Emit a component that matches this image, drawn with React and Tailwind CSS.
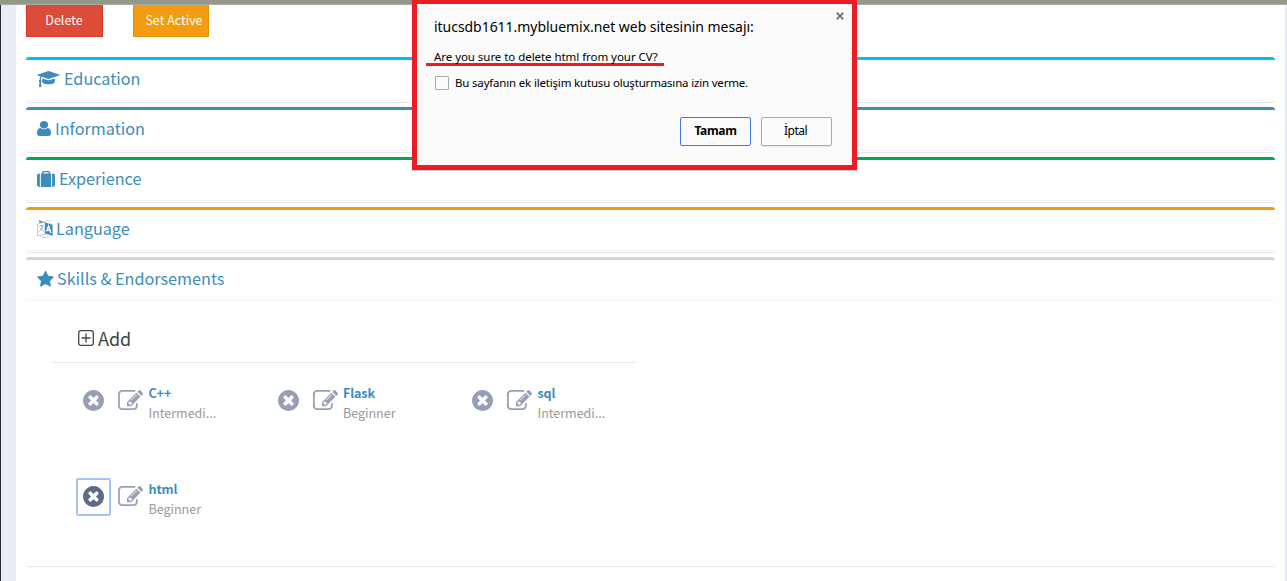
const PATHS = {
  cap: "M1774 836l18 316q4 69-82 128t-235 93.5-323 34.5-323-34.5-235-93.5-82-128l18-316 574 181q22 7 48 7t48-7zm530-324q0 23-22 31l-1120 352q-4 1-10 1t-10-1l-652-206q-43 34-71 111.5t-34 178.5q63 36 63 109 0 69-58 107l58 433q2 14-8 25-9 11-24 11h-192q-15 0-24-11-10-11-8-25l58-433q-58-38-58-107 0-73 65-111 11-207 98-330l-333-104q-22-8-22-31t22-31l1120-352q4-1 10-1t10 1l1120 352q22 8 22 31z",
  user: "M1536 1399q0 109-62.5 187t-150.5 78h-854q-88 0-150.5-78t-62.5-187q0-85 8.5-160.5t31.5-152 58.5-131 94-89 134.5-34.5q131 128 313 128t313-128q76 0 134.5 34.5t94 89 58.5 131 31.5 152 8.5 160.5zm-256-887q0 159-112.5 271.5t-271.5 112.5-271.5-112.5-112.5-271.5 112.5-271.5 271.5-112.5 271.5 112.5 112.5 271.5z",
  suitcase: "M640 256h512v-128h-512v128zm-352 0v1408h-64q-92 0-158-66t-66-158v-960q0-92 66-158t158-66h64zm1120 0v1408h-1024v-1408h128v-160q0-40 28-68t68-28h576q40 0 68 28t28 68v160h128zm384 224v960q0 92-66 158t-158 66h-64v-1408h64q92 0 158 66t66 158z",
  star: "M1728 647q0 22-26 48l-363 354 86 500q1 7 1 20 0 21-10.5 35.5t-30.5 14.5q-19 0-40-12l-449-236-449 236q-22 12-40 12-21 0-31.5-14.5t-10.5-35.5q0-6 2-20l86-500-364-354q-25-27-25-48 0-37 56-46l502-73 225-455q19-41 49-41t49 41l225 455 502 73q56 9 56 46z",
  remove: "M1277 1122q0-26-19-45l-181-181 181-181q19-19 19-45 0-27-19-46l-90-90q-19-19-46-19-26 0-45 19l-181 181-181-181q-19-19-45-19-27 0-46 19l-90 90q-19 19-19 46 0 26 19 45l181 181-181 181q-19 19-19 45 0 27 19 46l90 90q19 19 46 19 26 0 45-19l181-181 181 181q19 19 45 19 27 0 46-19l90-90q19-19 19-46zm387-226q0 209-103 385.5t-279.5 279.5-385.5 103-385.5-103-279.5-279.5-103-385.5 103-385.5 279.5-279.5 385.5-103 385.5 103 279.5 279.5 103 385.5z",
  edit: "M888 1184l116-116-152-152-116 116v56h96v96h56zm440-720q-16-16-33 1l-350 350q-17 17-1 33t33-1l350-350q17-17 1-33zm80 594v190q0 119-84.5 203.5t-203.5 84.5h-832q-119 0-203.5-84.5t-84.5-203.5v-832q0-119 84.5-203.5t203.5-84.5h832q63 0 117 25 15 7 18 23 3 17-9 29l-49 49q-14 14-32 8-23-6-45-6h-832q-66 0-113 47t-47 113v832q0 66 47 113t113 47h832q66 0 113-47t47-113v-126q0-13 9-22l64-64q15-15 35-7t20 29zm-96-738l288 288-672 672h-288v-288zm444 132l-92 92-288-288 92-92q28-28 68-28t68 28l152 152q28 28 28 68t-28 68z",
};

function Glyph({ name, viewBox, className }) {
  return (
    <svg viewBox={viewBox} className={className} fill="currentColor" preserveAspectRatio="none">
      <path d={PATHS[name]} />
    </svg>
  );
}

function LanguageIcon() {
  return (
    <svg viewBox="0 0 16 18" className="h-[18px] w-4 shrink-0">
      <path d="M2 0.3 9 2.5V4L2 2.2Z" fill="#3c8dbc" />
      <path d="M.5 4 8 2v12L.5 16Z" fill="#fff" stroke="#9db5ca" strokeWidth=".7" />
      <path d="M2.4 6.4 6.4 5.4M4.3 4.8v1.4M5.6 6c-.5 2.6-1.8 4.6-3.4 5.6M3 7.8c.8 1.4 2 2.5 3.6 3.2" fill="none" stroke="#7697b2" strokeWidth=".8" />
      <path d="M8 2.5 15.6 4.8v11L8 13.5Z" fill="#3c8dbc" />
      <path d="M9.5 11.6 11.6 6l2.3 7M10.3 9.8l2.8.8" fill="none" stroke="#fff" strokeWidth="1.3" />
      <path d="M8 2.5V.8h5.5v3" fill="none" stroke="#bccbd8" strokeWidth=".6" />
      <path d="M3 16c2.5 2 7 2 9.5.2" fill="none" stroke="#8fa3b5" strokeWidth=".8" strokeDasharray="1.5 .8" />
    </svg>
  );
}

function Section({ border, icon, gap, title, children }) {
  return (
    <section className={`rounded-[3px] border-t-[3px] bg-white shadow-[0_1px_1px_rgba(0,0,0,0.1)] ${border} ${children ? "h-[309px]" : "mb-[5px] h-[45px]"}`}>
      <h3 className={`flex h-[41px] items-center border-b border-[#f4f4f4] pb-[3px] pl-[11px] text-[16.2px] text-[#3c8dbc] ${gap}`}>
        {icon}
        <span className="pb-[2px] leading-[18px] whitespace-nowrap">{title}</span>
      </h3>
      {children}
    </section>
  );
}

function Skill({ name, level, active }) {
  return (
    <div className="flex h-24 w-[194.5px] items-start">
      <button className={`mt-[1px] flex h-[38px] w-[35px] shrink-0 items-center justify-center rounded-[2px] border-2 pb-[2px] ${active ? "border-[#a3c3fb] text-[#606c84]" : "border-transparent text-[#97a0b3]"}`}>
        <Glyph name="remove" viewBox="128 128 1536 1536" className="h-[21px] w-[21px]" />
      </button>
      <Glyph name="edit" viewBox="0 128 1784 1408" className="mt-[9px] ml-[7px] h-[20px] w-[25px] shrink-0 text-[#97a0b3]" />
      <div className="mt-[2px] ml-[5.5px] text-[12.5px] leading-5">
        <div className="font-semibold tracking-[-0.1px] text-[#3c8dbc]">{name}</div>
        <div className="text-[#999]">{level}</div>
      </div>
    </div>
  );
}

function Dialog() {
  return (
    <div className="absolute top-0 left-[412px] h-[170px] w-[445px] border-x-[5px] border-t-4 border-b-[5px] border-[#ed1c24] bg-[#fbfbfb] pt-[14px] pl-[17px] font-['Noto_Sans','Open_Sans',sans-serif] text-black shadow-[0_1px_1px_rgba(0,0,0,0.2)]">
      <svg viewBox="0 0 8 8" className="absolute top-2 right-[8px] h-2 w-2">
        <path d="m.8.8 6.4 6.4m0-6.4L.8 7.2" stroke="#777" strokeWidth="2" />
      </svg>
      <h2 className="text-[14px] leading-[18px] tracking-[-0.04px] whitespace-nowrap">itucsdb1611.mybluemix.net web sitesinin mesajı:</h2>
      <p className="mt-[13px] text-[11.5px] leading-4 tracking-[-0.05px] whitespace-nowrap">Are you sure to delete html from your CV?</p>
      <div className="-mt-[2px] -ml-2 h-[3px] w-[238px] bg-[#ed1c24]" />
      <label className="mt-[9px] ml-[1px] flex h-4 items-center gap-[6px] text-[11.5px] tracking-[-0.18px] whitespace-nowrap">
        <span className="h-[14px] w-[14px] rounded-[1px] border border-[#aaa]" />
        Bu sayfanın ek iletişim kutusu oluşturmasına izin verme.
      </label>
      <div className="mt-[26px] flex justify-end gap-[10px] pr-5 text-[12px] tracking-[-0.5px]">
        <button className="h-[29px] w-[71px] rounded-[2px] border border-[#3b78e7] pb-[2px] font-bold tracking-[-0.3px]">Tamam</button>
        <button className="h-[29px] w-[71px] rounded-[2px] border border-[#aaa] pr-[2px] pb-[2px] shadow-[0_1px_1px_rgba(0,0,0,0.08)]">İptal</button>
      </div>
    </div>
  );
}

export default function App() {
  return (
    <div className="relative flex h-[581px] w-[1287px] flex-col overflow-hidden bg-white font-['Noto_Sans_CJK_SC','Noto_Sans',sans-serif]">
      <div className="h-[5px] shrink-0 border-b border-[#aaa] bg-[#939888]" />
      <div className="flex min-h-0 flex-1 border-l border-[#222d32] bg-[#eaedf3]">
        <main className="mr-[2px] ml-[15px] flex-1 bg-white pr-[10.5px] pl-[10px] shadow-[0_1px_1px_rgba(0,0,0,0.1)]">
          <div className="mb-5 flex h-8 gap-[30px] text-[12.5px] text-white">
            <button className="h-8 w-[77px] border border-t-0 border-[#d73925] bg-[#dd4b39] pr-[1px]">Delete</button>
            <button className="h-8 w-[76px] border border-t-0 border-[#e08e0b] bg-[#f39c12] pl-[6px] whitespace-nowrap">Set Active</button>
          </div>
          <Section border="border-[#00c0ef]" gap="gap-1" title="Education" icon={<Glyph name="cap" viewBox="0 128 2304 1536" className="h-[16px] w-[23px] shrink-0" />} />
          <Section border="border-[#3c8dbc]" gap="gap-1" title="Information" icon={<Glyph name="user" viewBox="256 128 1280 1536" className="h-[15px] w-[14px] shrink-0" />} />
          <Section border="border-[#00a65a]" gap="gap-1" title="Experience" icon={<Glyph name="suitcase" viewBox="0 0 1792 1664" className="h-[16px] w-[18px] shrink-0" />} />
          <Section border="border-[#f39c12]" gap="gap-[3px]" title="Language" icon={<LanguageIcon />} />
          <Section border="border-[#d2d6de]" gap="gap-[3px]" title="Skills & Endorsements" icon={<Glyph name="star" viewBox="64 59 1664 1600" className="h-[16px] w-[17px] shrink-0" />}>
            <div className="mt-[9px] ml-[26px] flex h-[52px] w-[584px] items-center gap-[4px] rounded-[3px] pt-[4px] pl-[26px] text-[18px] text-[#444] shadow-[0_1px_1px_rgba(0,0,0,0.1)]">
              <svg viewBox="0 0 16 16" className="h-4 w-4" fill="none" stroke="currentColor">
                <rect x=".7" y=".7" width="14.6" height="14.6" rx="2.4" strokeWidth="1.3" />
                <path d="M3.5 8h9M8 3.5v9" strokeWidth="1.3" />
              </svg>
              <span className="leading-5">Add</span>
            </div>
            <div className="mt-[19px] ml-[50px] flex w-[584px] flex-wrap">
              <Skill name="C++" level="Intermedi..." />
              <Skill name="Flask" level="Beginner" />
              <Skill name="sql" level="Intermedi..." />
              <Skill name="html" level="Beginner" active />
            </div>
          </Section>
        </main>
      </div>
      <Dialog />
    </div>
  );
}
